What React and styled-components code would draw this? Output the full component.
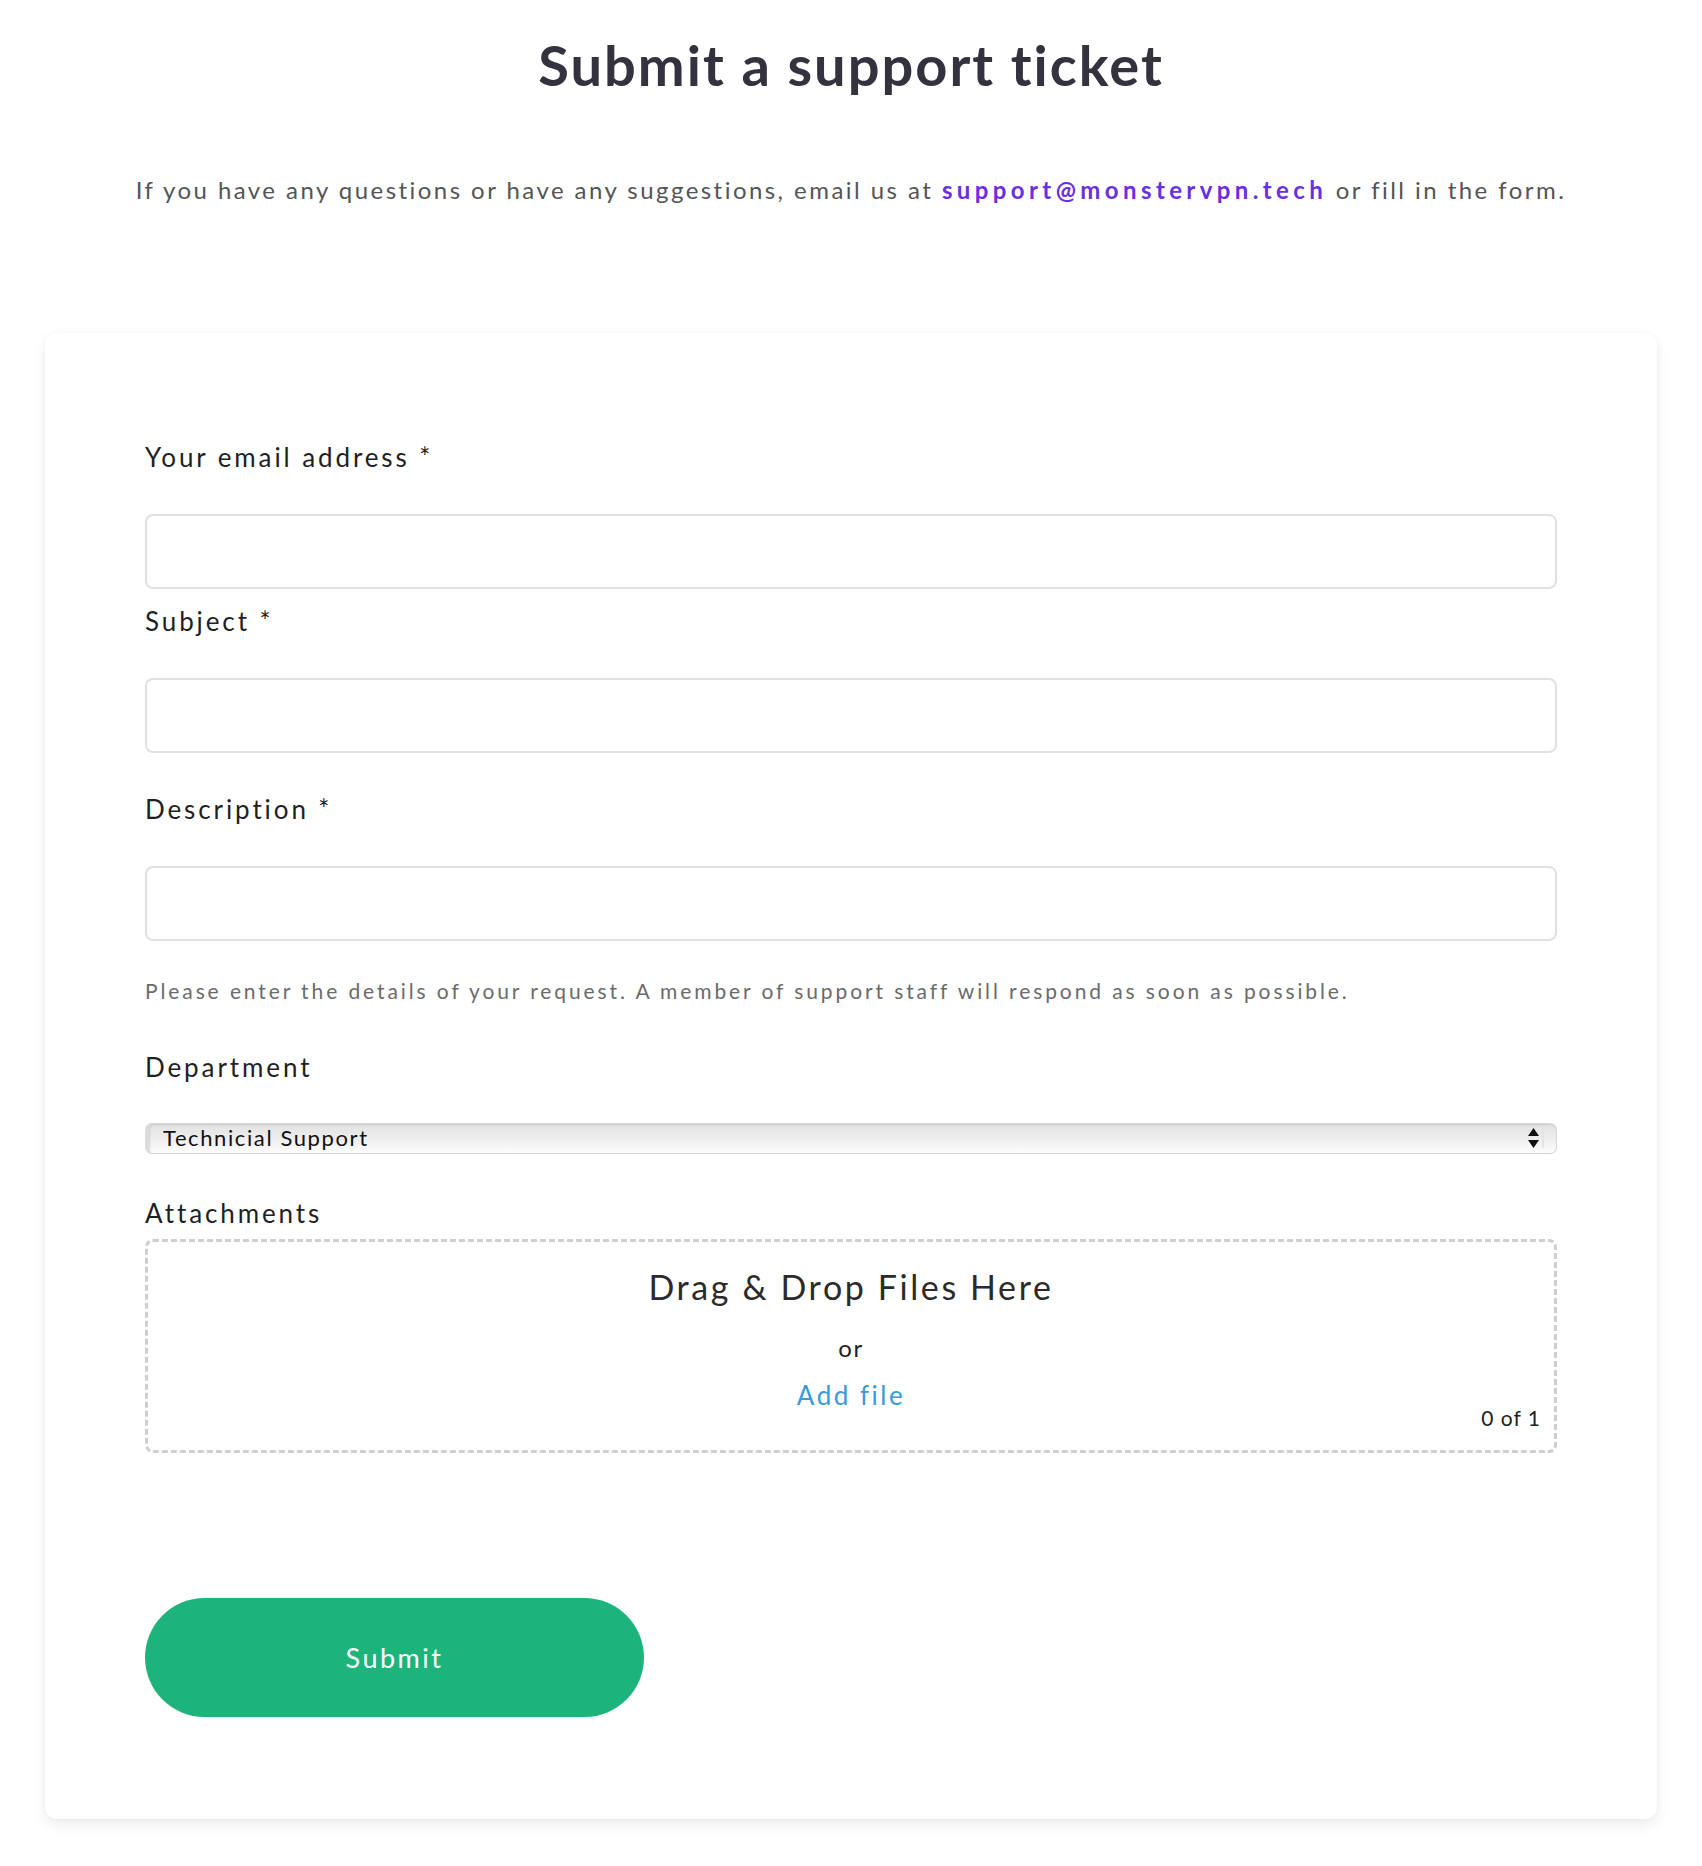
import React from 'react';
import styled, { createGlobalStyle } from 'styled-components';

const GlobalStyle = createGlobalStyle`
  html, body {
    margin: 0;
    padding: 0;
    background: #fff;
  }
  body {
    font-family: Lato, "Noto Sans", sans-serif;
    color: #222;
  }
  * { box-sizing: border-box; }
`;

const Page = styled.div`
  width: 1702px;
  padding: 33px 45px 40px;
`;

const Title = styled.h1`
  margin: 0;
  text-align: center;
  font-size: 56px;
  line-height: 64px;
  font-weight: 700;
  letter-spacing: 2px;
  color: #35323f;
`;

const Intro = styled.p`
  margin: 78px 0 128px;
  text-align: center;
  font-size: 24px;
  line-height: 30px;
  letter-spacing: 2.45px;
  color: #555;
`;

const Mail = styled.a`
  color: #6a2fe4;
  font-weight: 700;
  letter-spacing: 4.4px;
  text-decoration: none;
`;

const Card = styled.form`
  background: #fff;
  border-radius: 12px;
  box-shadow: 0 6px 14px rgba(0, 0, 0, 0.07), 0 0 6px rgba(0, 0, 0, 0.03);
  padding: 109px 100px 102px;
  display: flex;
  flex-direction: column;
`;

const Label = styled.label`
  display: block;
  font-size: 26px;
  line-height: 30px;
  letter-spacing: 2.9px;
  color: #1f1f24;
  margin-top: ${(p) => p.$top || 0}px;
  margin-bottom: ${(p) => p.$bottom ?? 42}px;
`;

const Input = styled.input`
  width: 100%;
  height: 75px;
  border: 2px solid #e1e1e1;
  border-radius: 8px;
  background: #fff;
  padding: 0 18px;
  font-size: 22px;
  outline: none;
`;

const Help = styled.p`
  margin: 37px 0 0;
  font-size: 21px;
  line-height: 26px;
  letter-spacing: 2.9px;
  color: #6b6b6b;
`;

const SelectWrap = styled.div`
  position: relative;
  height: 31px;
`;

const Select = styled.select`
  appearance: none;
  -webkit-appearance: none;
  width: 100%;
  height: 31px;
  border: 1px solid #d6d6d6;
  border-left: 4px solid #dcdcdc;
  border-radius: 7px;
  padding: 0 40px 2px 14px;
  font-family: Lato, "Noto Sans", sans-serif;
  font-size: 22px;
  letter-spacing: 1.6px;
  color: #111;
  background: linear-gradient(#e3e3e3 0%, #ececec 45%, #f7f7f7 80%, #fdfdfd 100%);
  box-shadow: inset 1px 1px 2px rgba(0, 0, 0, 0.12);
`;

const Arrows = styled.span`
  position: absolute;
  right: 13px;
  top: 5px;
  padding-right: 3px;
  border-right: 2px solid #e4e4e4;
  pointer-events: none;
  display: flex;
`;

const DropZone = styled.div`
  border: 3px dashed #cfcfcf;
  border-radius: 8px;
  height: 214px;
  padding-top: 25px;
  display: flex;
  flex-direction: column;
  align-items: center;
  position: relative;
`;

const DropTitle = styled.div`
  font-size: 34px;
  line-height: 40px;
  letter-spacing: 2.6px;
  color: #2b2b2b;
`;

const Or = styled.div`
  margin-top: 27px;
  font-size: 24px;
  line-height: 28px;
  letter-spacing: 1.5px;
  color: #222;
`;

const AddFile = styled.a`
  margin-top: 18px;
  font-size: 26px;
  line-height: 30px;
  letter-spacing: 2.5px;
  color: #3a9bd9;
  text-decoration: none;
  cursor: pointer;
`;

const Counter = styled.span`
  position: absolute;
  right: 13px;
  bottom: 20px;
  font-size: 21px;
  letter-spacing: 1px;
  color: #222;
`;

const SubmitButton = styled.button`
  margin-top: 145px;
  width: 499px;
  height: 119px;
  border: none;
  border-radius: 60px;
  background: #1db47c;
  color: #fff;
  font-family: Lato, "Noto Sans", sans-serif;
  font-size: 27px;
  letter-spacing: 2.5px;
  cursor: pointer;
`;

const App = () => {
  return (
    <>
      <GlobalStyle />
      <Page>
        <Title>Submit a support ticket</Title>
        <Intro>
          If you have any questions or have any suggestions, email us at{' '}
          <Mail href="#">support@monstervpn.tech</Mail> or fill in the form.
        </Intro>

        <Card onSubmit={(e) => e.preventDefault()}>
          <Label>Your email address *</Label>
          <Input type="email" />

          <Label $top={17}>Subject *</Label>
          <Input type="text" />

          <Label $top={41}>Description *</Label>
          <Input type="text" />
          <Help>Please enter the details of your request. A member of support staff will respond as soon as possible.</Help>

          <Label $top={48} $bottom={41}>Department</Label>
          <SelectWrap>
            <Select defaultValue="tech">
              <option value="tech">Technicial Support</option>
              <option value="billing">Billing</option>
            </Select>
            <Arrows>
              <svg width="11" height="20" viewBox="0 0 11 20">
                <path d="M5.5 0 L11 8 L0 8 Z" fill="#111" />
                <path d="M0 12 L11 12 L5.5 20 Z" fill="#111" />
              </svg>
            </Arrows>
          </SelectWrap>

          <Label $top={44} $bottom={11}>Attachments</Label>
          <DropZone>
            <DropTitle>Drag &amp; Drop Files Here</DropTitle>
            <Or>or</Or>
            <AddFile>Add file</AddFile>
            <Counter>0 of 1</Counter>
          </DropZone>

          <SubmitButton type="submit">Submit</SubmitButton>
        </Card>
      </Page>
    </>
  );
};

export default App;
